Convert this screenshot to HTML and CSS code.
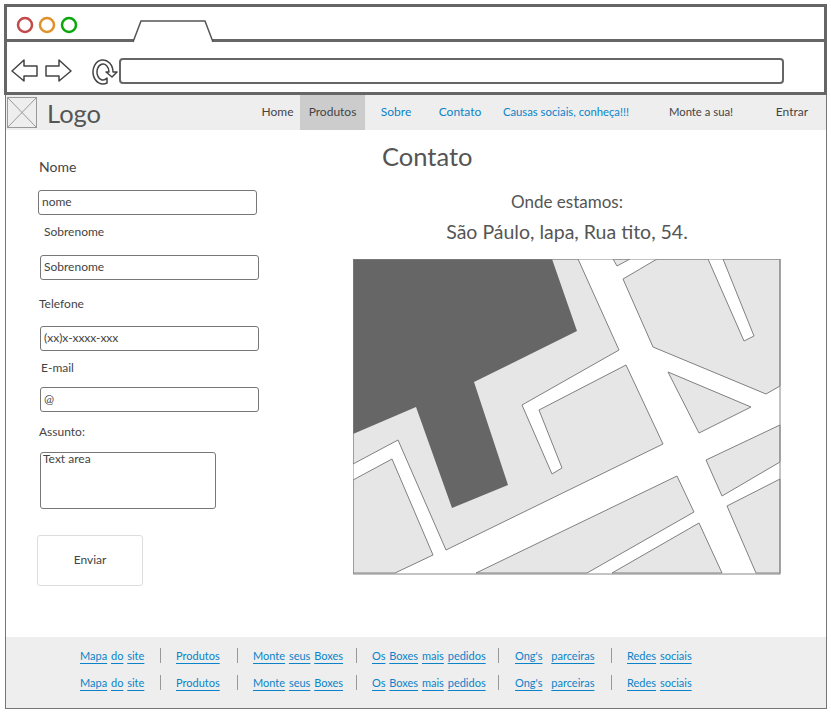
FILE: index.html
```html
<!DOCTYPE html>
<html lang="pt-BR">

<head>
    <meta charset="UTF-8">
    <title>Contato</title>
    <link rel="stylesheet" href="styles.css">
</head>

<body>
    <div class="browser">
        <div class="title-bar">
            <svg class="title-icons" width="215" height="36" viewBox="0 0 215 36">
                <circle class="dot-red" cx="18" cy="18" r="7"></circle>
                <circle class="dot-orange" cx="40" cy="18" r="7"></circle>
                <circle class="dot-green" cx="62" cy="18" r="7"></circle>
                <path class="tab" d="M126 35 L134 14 H198 L206 35"></path>
            </svg>
        </div>
        <div class="address-bar">
            <svg class="nav-icons" width="112" height="30" viewBox="0 0 112 30">
                <path d="M5 15 L17 4 V10 H30 V20 H17 V25 Z"></path>
                <path d="M39 10 H52 V4 L64 15 L52 25 V20 H39 Z"></path>
                <path d="M106 16 A10 12 0 1 0 100 27 L100 22 A6 8 0 1 1 102 16 L99 16 L105 21 L110 16 Z"></path>
            </svg>
            <div class="url-box"></div>
        </div>
    </div>

    <div class="page">
        <header class="top-nav">
            <svg class="logo-img" width="30" height="31" viewBox="0 0 30 31">
                <rect x="0.5" y="0.5" width="29" height="30"></rect>
                <path d="M0.5 0.5 L29.5 30.5 M29.5 0.5 L0.5 30.5"></path>
            </svg>
            <span class="logo-text">Logo</span>
            <nav class="menu">
                <a href="#">Home</a>
                <a href="#" class="active">Produtos</a>
                <a href="#" class="blue">Sobre</a>
                <a href="#" class="blue">Contato</a>
                <a href="#" class="blue small">Causas sociais, conheça!!!</a>
                <a href="#" class="small">Monte a sua!</a>
                <a href="#">Entrar</a>
            </nav>
        </header>

        <main class="content">
            <form class="contact-form">
                <label class="big-label" for="nome">Nome</label>
                <input class="field first-field" id="nome" value="nome">
                <label class="label-sobrenome" for="sobrenome">Sobrenome</label>
                <input class="field" id="sobrenome" value="Sobrenome">
                <label class="label-telefone" for="telefone">Telefone</label>
                <input class="field" id="telefone" value="(xx)x-xxxx-xxx">
                <label class="label-email" for="email">E-mail</label>
                <input class="field" id="email" value="@">
                <label class="label-assunto" for="assunto">Assunto:</label>
                <textarea class="field area" id="assunto">Text area</textarea>
                <button class="send" type="button">Enviar</button>
            </form>

            <section class="contact-info">
                <h1>Contato</h1>
                <p class="where">Onde estamos:</p>
                <p class="address">São Páulo, lapa, Rua tito, 54.</p>

                <!-- coordinates follow the map picture, 427 x 315 -->
                <svg class="map" width="428" height="316" viewBox="353 260 428 316">
                    <rect class="map-bg" x="353" y="260" width="427" height="315"></rect>
                    <polygon class="block" points="552,260 578,260 619,351 522,406 552,475 562,469 539,411 626,366 663,445 446,551 398,441 353,465 353,260"></polygon>
                    <polygon class="building" points="353,260 552,260 577,332 474,383 508,486 452,509 416,408 353,435"></polygon>
                    <polygon class="block" points="353,481 392,460 433,556 395,574 353,574"></polygon>
                    <polygon class="block" points="677,477 694,513 587,574 476,574"></polygon>
                    <polygon class="block" points="699,524 722,574 612,574"></polygon>
                    <polygon class="block" points="727,507 780,480 780,574 756,574"></polygon>
                    <polygon class="block" points="706,461 780,426 780,463 722,497"></polygon>
                    <polygon class="block" points="668,373 751,408 699,434"></polygon>
                    <polygon class="block" points="623,280 657,260 708,260 744,342 754,337 723,260 780,260 780,387 766,395 653,348"></polygon>
                    <polygon class="block" points="613,260 630,260 617,267"></polygon>
                    <rect class="map-frame" x="353" y="260" width="427" height="315"></rect>
                </svg>
            </section>
        </main>

        <footer class="site-footer">
            <div class="footer-row">
                <a href="#"><span>Mapa</span> <span>do</span> <span>site</span></a><i></i>
                <a href="#"><span>Produtos</span></a><i></i>
                <a href="#"><span>Monte</span> <span>seus</span> <span>Boxes</span></a><i></i>
                <a href="#"><span>Os</span> <span>Boxes</span> <span>mais</span> <span>pedidos</span></a><i></i>
                <a href="#" class="wide"><span>Ong's</span> <span>parceiras</span></a><i></i>
                <a href="#"><span>Redes</span> <span>sociais</span></a>
            </div>
            <div class="footer-row">
                <a href="#"><span>Mapa</span> <span>do</span> <span>site</span></a><i></i>
                <a href="#"><span>Produtos</span></a><i></i>
                <a href="#"><span>Monte</span> <span>seus</span> <span>Boxes</span></a><i></i>
                <a href="#"><span>Os</span> <span>Boxes</span> <span>mais</span> <span>pedidos</span></a><i></i>
                <a href="#" class="wide"><span>Ong's</span> <span>parceiras</span></a><i></i>
                <a href="#"><span>Redes</span> <span>sociais</span></a>
            </div>
        </footer>
    </div>
</body>

</html>
```

FILE: styles.css
```css
html {
    font-family: Lato, "Open Sans", sans-serif;
    color: #444;
}

body {
    margin: 0;
    padding: 4px 0 0 4px;
    width: 827px;
    height: 709px;
    box-sizing: border-box;
    overflow: hidden;
    background: white;
}

/* Browser chrome */

.browser {
    border: 3px solid #666;
    box-sizing: border-box;
    height: 91px;
}

.title-bar {
    height: 32px;
    border-bottom: 3px solid #666;
}

.title-icons {
    display: block;
}

.dot-red,
.dot-orange,
.dot-green {
    fill: none;
    stroke-width: 2.5;
}

.dot-red {
    stroke: #c24a4a;
}

.dot-orange {
    stroke: #e0912a;
}

.dot-green {
    stroke: #0aa80a;
}

.tab {
    fill: white;
    stroke: #555;
    stroke-width: 1.5;
}

.address-bar {
    display: flex;
    align-items: center;
    height: 50px;
    padding-top: 8px;
    box-sizing: border-box;
}

.nav-icons {
    display: block;
    flex: none;
}

.nav-icons path {
    fill: none;
    stroke: #444;
    stroke-width: 1.5;
    stroke-linejoin: round;
}

.url-box {
    box-sizing: border-box;
    width: 665px;
    height: 26px;
    border: 2px solid #666;
    border-radius: 4px;
}

/* Page */

.page {
    margin-left: 1px;
    height: 614px;
    display: flex;
    flex-direction: column;
    box-sizing: border-box;
    border: 1px solid #777;
    border-top: 0;
}

.top-nav {
    display: flex;
    align-items: center;
    height: 35px;
    background: #eeeeee;
    flex: none;
}

.logo-img {
    margin-left: 1px;
    flex: none;
}

.logo-img rect,
.logo-img path {
    fill: none;
    stroke: #999;
}

.logo-text {
    margin-left: 10px;
    font-size: 25.5px;
    color: #555;
}

.menu {
    margin-left: auto;
    margin-right: 5px;
    height: 100%;
    display: grid;
    grid-template-columns: 45px 65px 62px 66px 146px 124px 58px;
    font-size: 12px;
}

.menu a {
    display: flex;
    align-items: center;
    justify-content: center;
    padding-bottom: 3px;
    box-sizing: border-box;
    color: #444;
    text-decoration: none;
    white-space: nowrap;
}

.menu a.active {
    background: #cccccc;
}

.menu a.blue {
    color: #0b83c8;
}

.menu a.small {
    font-size: 11.3px;
}

.content {
    flex: 1;
    display: flex;
}

.contact-form {
    width: 340px;
    flex: none;
    padding-left: 32px;
    box-sizing: border-box;
    display: flex;
    flex-direction: column;
    align-items: flex-start;
    font-size: 12px;
}

.contact-form label {
    height: 16px;
    line-height: 16px;
    margin-left: 1px;
}

.contact-form .big-label {
    margin-top: 29px;
    margin-bottom: 15px;
    font-size: 14px;
}

.contact-form .label-sobrenome {
    margin-left: 6px;
    margin-top: 9px;
    margin-bottom: 15px;
}

.contact-form .label-telefone {
    margin-top: 16px;
    margin-bottom: 14px;
}

.contact-form .label-email {
    margin-top: 9px;
    margin-bottom: 11px;
    margin-left: 3px;
}

.contact-form .label-assunto {
    margin-top: 12px;
    margin-bottom: 12px;
}

.field {
    display: block;
    box-sizing: border-box;
    width: 219px;
    height: 25px;
    margin: 0 0 0 2px;
    padding: 0 3px 2px;
    border: 1px solid #777;
    border-radius: 3px;
    background: white;
    font: inherit;
    color: #444;
    outline: none;
    resize: none;
}

.first-field {
    margin-left: 0;
}

.area {
    width: 176px;
    height: 57px;
    padding: 0 2px;
    line-height: 12px;
}

.send {
    margin: 26px 0 0 -1px;
    width: 106px;
    height: 51px;
    padding: 0 0 3px;
    border: 1px solid #ddd;
    border-radius: 3px;
    background: white;
    font: inherit;
    color: #444;
}

.contact-info {
    width: 428px;
    margin-left: 7px;
}

.contact-info h1 {
    margin: 11px 0 0 29px;
    font-size: 25.5px;
    line-height: 30px;
    font-weight: normal;
    color: #555;
}

.contact-info p {
    margin: 0;
    text-align: center;
    color: #555;
    line-height: 30px;
}

.where {
    padding-top: 16px;
    font-size: 17px;
}

.contact-info .address {
    font-size: 19.5px;
}

/* Map */

.map {
    display: block;
    margin-top: 12px;
}

.map-bg {
    fill: white;
}

.block {
    fill: #e6e6e6;
    stroke: #808080;
    stroke-width: 1;
}

.building {
    fill: #666666;
}

.map-frame {
    fill: none;
    stroke: #888;
}

/* Footer */

.site-footer {
    height: 71px;
    flex: none;
    background: #eeeeee;
    padding: 5px 0 0 74px;
    box-sizing: border-box;
}

.footer-row {
    display: grid;
    grid-template-columns: 65px 31px 46px 31px 88px 31px 111px 32px 81px 31px 63px;
    height: 27px;
    align-items: center;
    font-size: 11px;
    word-spacing: 1px;
}

.footer-row a {
    color: #0b83c8;
    text-decoration: none;
    white-space: nowrap;
}

.footer-row a.wide {
    word-spacing: 6px;
}

.footer-row a span {
    text-decoration: underline;
    text-underline-offset: 3px;
}

.footer-row i {
    display: block;
    width: 1px;
    height: 15px;
    margin-left: 15px;
    background: #999;
}
```
